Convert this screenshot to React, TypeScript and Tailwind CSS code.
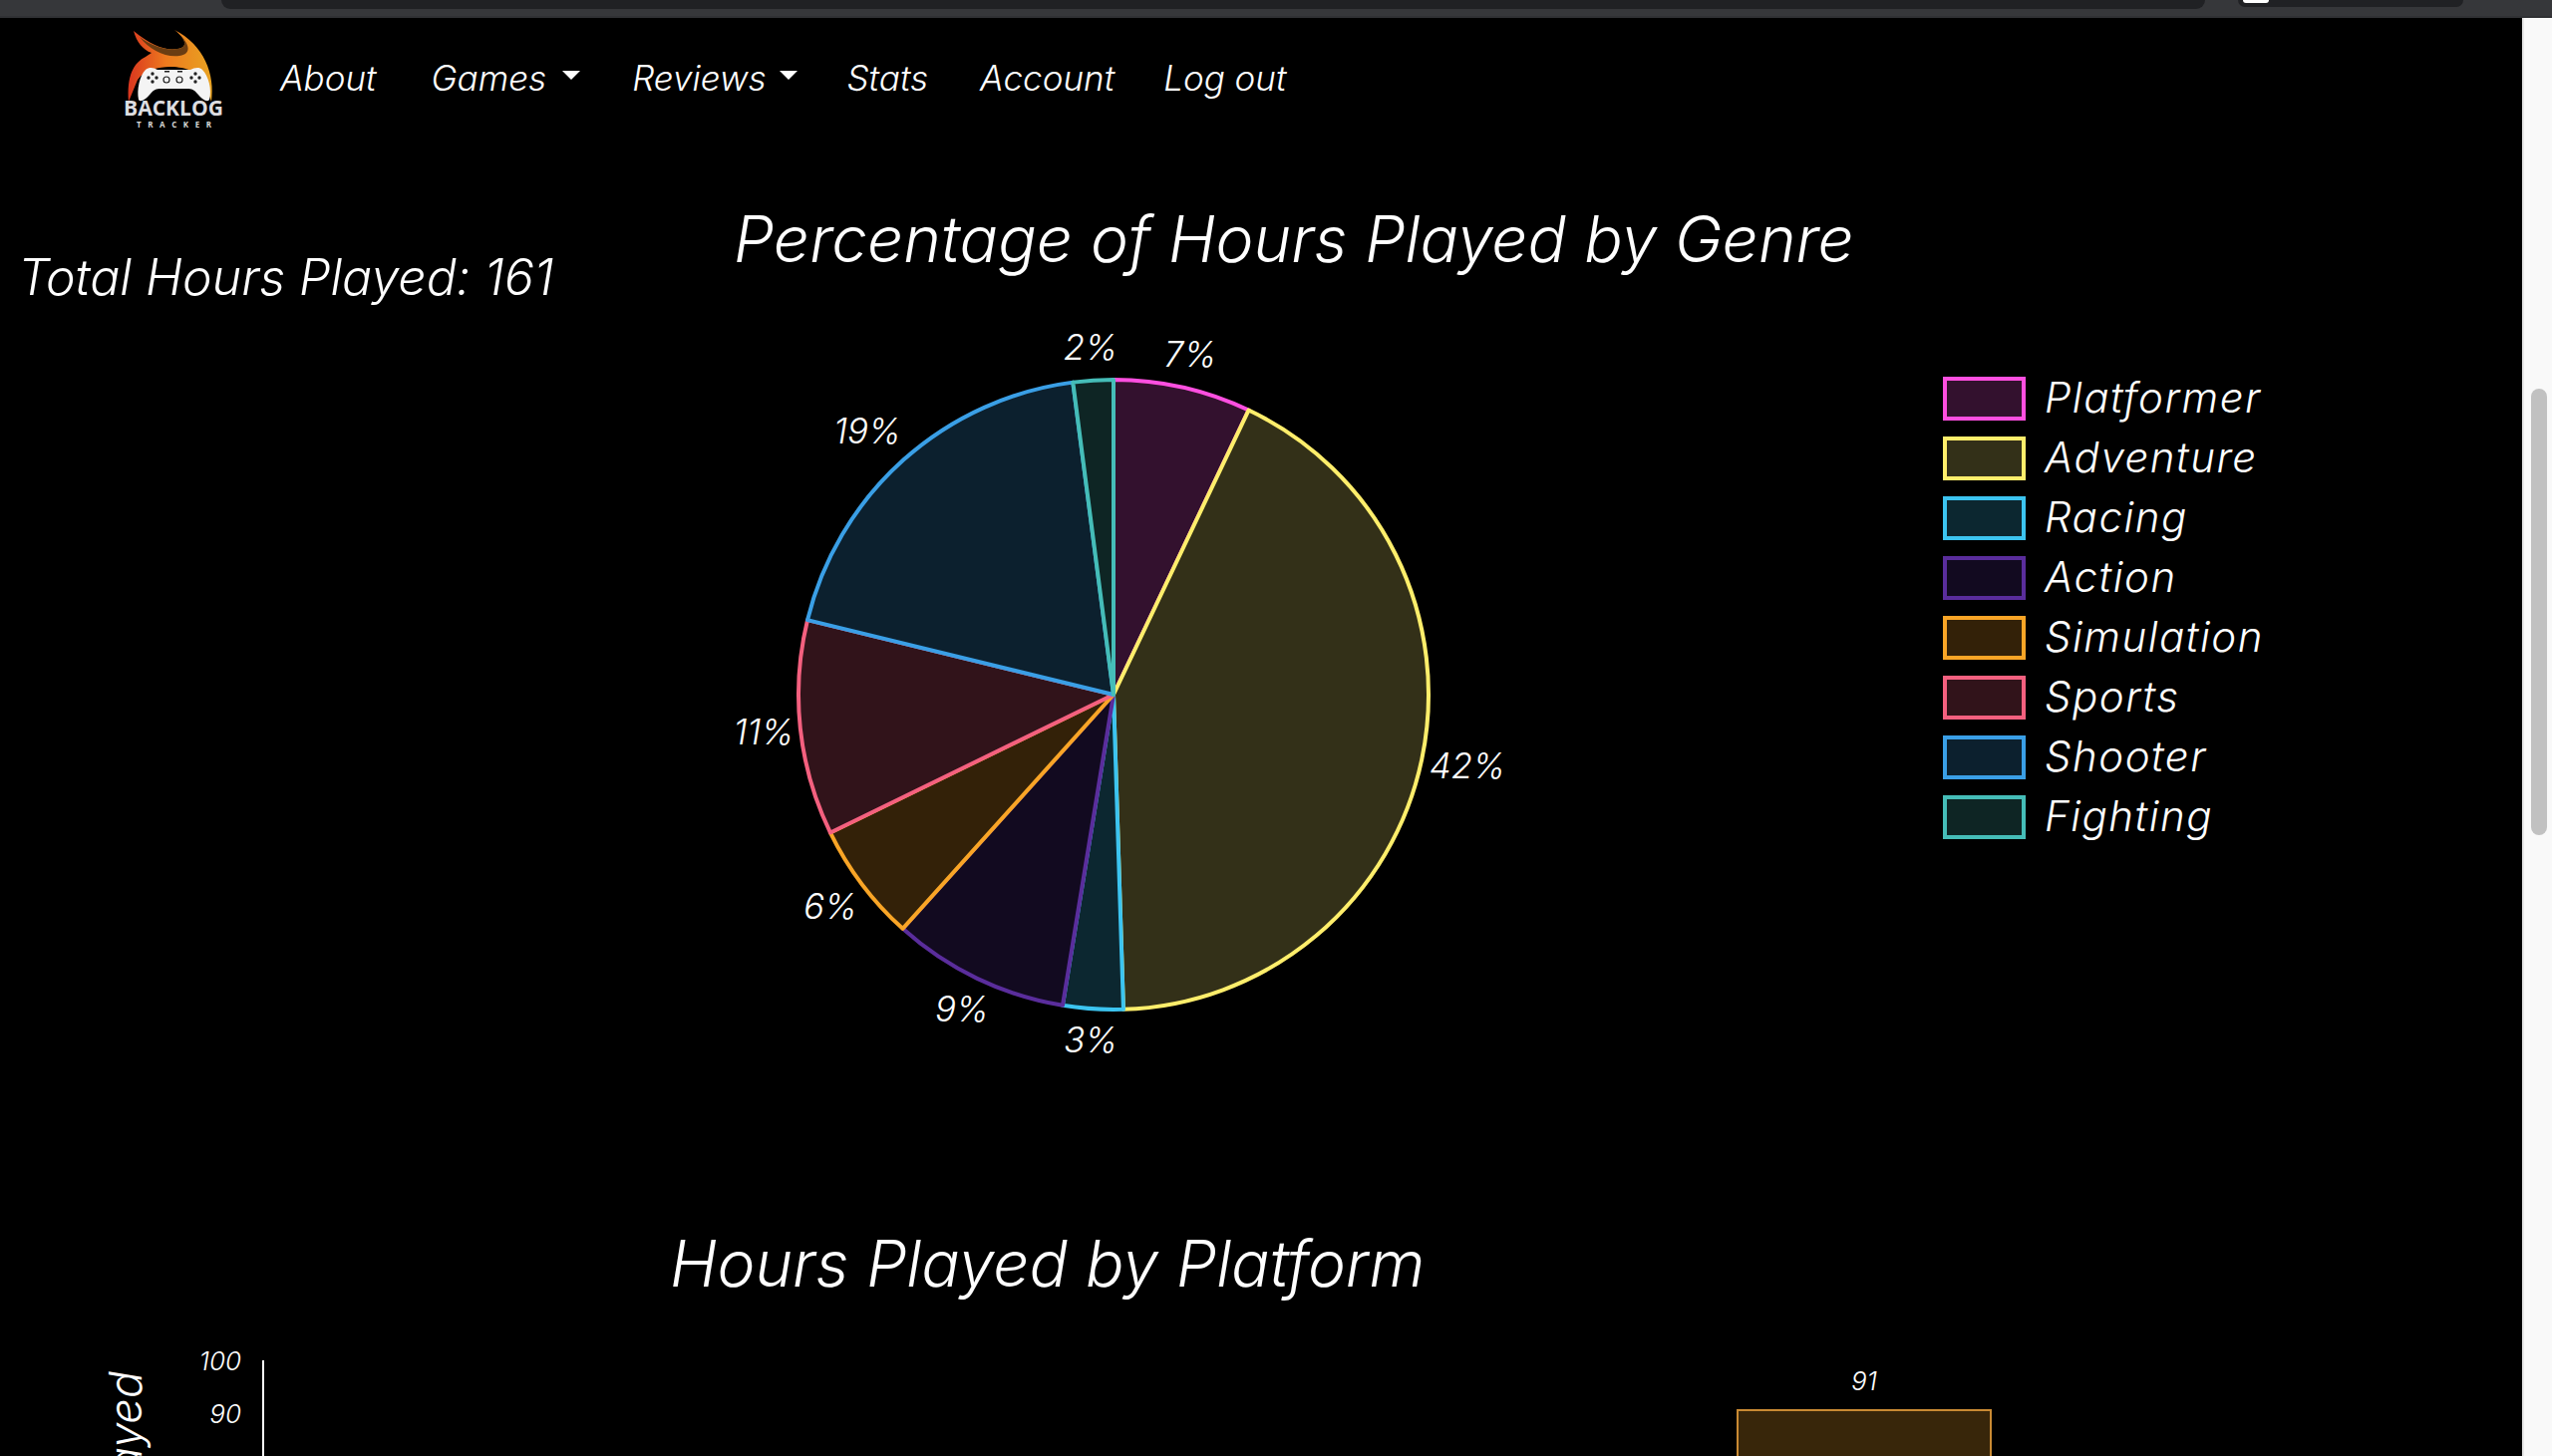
const slices = [
  { label: "Platformer", from: 0, to: 25.4, stroke: "#ff4fe0", fill: "#33112e" },
  { label: "Adventure", from: 25.4, to: 178.2, stroke: "#ffee6b", fill: "#333018" },
  { label: "Racing", from: 178.2, to: 189.3, stroke: "#3cc4f0", fill: "#0c2730" },
  { label: "Action", from: 189.3, to: 222, stroke: "#5a2d9c", fill: "#120a20" },
  { label: "Simulation", from: 222, to: 244, stroke: "#f9a526", fill: "#332108" },
  { label: "Sports", from: 244, to: 283.7, stroke: "#f4607f", fill: "#31131a" },
  { label: "Shooter", from: 283.7, to: 352.6, stroke: "#3a9fe6", fill: "#0c202e" },
  { label: "Fighting", from: 352.6, to: 360, stroke: "#45bdb8", fill: "#0e2524" },
];

const pieLabels = [
  { text: "7%", x: 458, y: 58 },
  { text: "42%", x: 736, y: 471 },
  { text: "3%", x: 358, y: 746 },
  { text: "9%", x: 229, y: 715 },
  { text: "6%", x: 97, y: 612 },
  { text: "11%", x: 30, y: 437 },
  { text: "19%", x: 134, y: 135 },
  { text: "2%", x: 358, y: 51 },
];

function slicePath(from: number, to: number) {
  const cx = 381;
  const cy = 387;
  const r = 316;
  const a = (from * Math.PI) / 180;
  const b = (to * Math.PI) / 180;
  const large = to - from > 180 ? 1 : 0;
  return `M${cx} ${cy} L${cx + r * Math.sin(a)} ${cy - r * Math.cos(a)} A${r} ${r} 0 ${large} 1 ${cx + r * Math.sin(b)} ${cy - r * Math.cos(b)} Z`;
}

function Logo() {
  return (
    <svg width="130" height="115" viewBox="0 0 130 115">
      <defs>
        <linearGradient id="flame" x1="0" y1="0" x2="1" y2="0">
          <stop offset="0" stopColor="#d9361f" />
          <stop offset="0.45" stopColor="#ee7a1e" />
          <stop offset="1" stopColor="#e8a322" />
        </linearGradient>
      </defs>
      <path d="M24 11 C27 22 33 30 42 33 L36 37 C24 43 17 56 19 82 L28 60 C35 50 50 47 60 47 C72 47 88 50 95 62 L102 82 C106 55 95 25 65 10 C78 20 78 28 68 29 C56 31 42 26 24 11 Z" fill="url(#flame)" />
      <path d="M30 17 C40 30 56 38 70 36 C84 34 80 22 65 10 C78 20 78 28 68 29 C56 31 42 26 30 17 Z" fill="#6b3d12" />
      <path d="M29 80 C27 70 30 56 36 50 C40 47 44 48 48 50 L81 50 C85 48 90 47 93 50 C99 56 103 70 100 80 C98 83 93 80 88 74 C85 70 82 69 78 69 L51 69 C47 69 44 70 41 74 C36 80 31 83 29 80 Z" fill="#f4f4f4" />
      <g fill="#222">
        <circle cx="43" cy="54" r="1.7" />
        <circle cx="43" cy="62" r="1.7" />
        <circle cx="39" cy="58" r="1.7" />
        <circle cx="47" cy="58" r="1.7" />
        <circle cx="86" cy="54" r="1.7" />
        <circle cx="86" cy="62" r="1.7" />
        <circle cx="82" cy="58" r="1.7" />
        <circle cx="90" cy="58" r="1.7" />
        <rect x="55" y="51" width="5" height="1.5" />
        <rect x="68" y="51" width="5" height="1.5" />
      </g>
      <circle cx="57" cy="60" r="3" fill="none" stroke="#222" strokeWidth="1.2" />
      <circle cx="70" cy="60" r="3" fill="none" stroke="#222" strokeWidth="1.2" />
      <text x="14" y="96" textLength="100" lengthAdjust="spacingAndGlyphs" fontSize="21" fontStyle="normal" fontWeight="700" fill="#dddde0" fontFamily="'Open Sans', sans-serif">BACKLOG</text>
      <text x="27" y="108" textLength="75" fontSize="8" fontStyle="normal" fontWeight="700" fill="#d8d8d8" fontFamily="'Open Sans', sans-serif">TRACKER</text>
    </svg>
  );
}

function PieChart() {
  return (
    <svg width="820" height="780" viewBox="0 0 820 780" className="block overflow-visible">
      {slices.map((s) => (
        <path key={s.label} d={slicePath(s.from, s.to)} fill={s.fill} stroke={s.stroke} strokeWidth="4" strokeLinejoin="round" />
      ))}
      {pieLabels.map((l) => (
        <text key={l.text} x={l.x} y={l.y} textAnchor="middle" fontSize="35" fontStyle="italic" fontWeight="300" fill="#fff" fontFamily="Inter, sans-serif">{l.text}</text>
      ))}
    </svg>
  );
}

function BarChart() {
  return (
    <svg width="2530" height="140" viewBox="0 0 2530 140" className="block">
      <text transform="translate(142 44) rotate(-90)" fontSize="45" fontStyle="italic" fontWeight="300" fill="#fff" fontFamily="Inter, sans-serif" textAnchor="end">Hours Played</text>
      <line x1="264" y1="33" x2="264" y2="140" stroke="#fff" strokeWidth="2" />
      <text x="242" y="43" textAnchor="end" fontSize="26" fontStyle="italic" fontWeight="300" fill="#fff" fontFamily="Inter, sans-serif">100</text>
      <text x="242" y="96" textAnchor="end" fontSize="26" fontStyle="italic" fontWeight="300" fill="#fff" fontFamily="Inter, sans-serif">90</text>
      <text x="242" y="148" textAnchor="end" fontSize="26" fontStyle="italic" fontWeight="300" fill="#fff" fontFamily="Inter, sans-serif">80</text>
      <text x="1870" y="63" textAnchor="middle" fontSize="26" fontStyle="italic" fontWeight="300" fill="#fff" fontFamily="Inter, sans-serif">91</text>
      <rect x="1743" y="83" width="254" height="80" fill="#38260a" stroke="#c98a33" strokeWidth="2" />
    </svg>
  );
}

function NavLink({ label, caret, className }: { label: string; caret?: boolean; className?: string }) {
  return (
    <a href="#" className={className ?? "flex items-center gap-[16px] text-white"}>
      {label}
      {caret && <span className="w-0 h-0 border-x-[9px] border-x-transparent border-t-[9px] border-t-white mb-[6px]" />}
    </a>
  );
}

export default function App() {
  return (
    <div className="w-[2560px] h-[1461px] overflow-hidden flex flex-col bg-black italic font-light text-white font-['Inter',sans-serif]">
      <div className="h-[18px] shrink-0 bg-[#36373a] flex items-start border-b-2 border-b-[#303134] not-italic">
        <div className="ml-[222px] w-[1990px] h-[9px] bg-[#202124] rounded-b-[14px]" />
        <div className="ml-[33px] w-[226px] h-[7px] bg-[#202124] rounded-b-[14px] pl-[5px]">
          <div className="w-[26px] h-[3px] bg-white rounded-b-full" />
        </div>
      </div>

      <div className="flex flex-1 min-h-0">
        <main className="flex-1 min-w-0 overflow-hidden">
          <nav className="h-[118px] flex items-center pl-[110px] text-[35px]">
            <Logo />
            <div className="flex items-center gap-[52px] ml-[41px] mt-[2px]">
              <NavLink label="About" className="flex items-center text-white mr-[3px]" />
              <NavLink label="Games" caret />
              <NavLink label="Reviews" caret className="flex items-center gap-[13px] text-white mr-[-2px]" />
              <NavLink label="Stats" />
              <NavLink label="Account" className="flex items-center text-white mr-[-3px]" />
              <NavLink label="Log out" />
            </div>
          </nav>

          <section className="flex">
            <div className="w-[736px] shrink-0 pl-[18px] pt-[117px] text-[50px] leading-none">Total Hours Played: 161</div>
            <div className="w-[1120px] shrink-0">
              <h1 className="text-[64px] leading-none pt-[72px] whitespace-nowrap">Percentage of Hours Played by Genre</h1>
              <div className="pt-[38px]">
                <PieChart />
              </div>
            </div>
            <ul className="ml-[93px] pt-[243px] flex flex-col gap-[18px]">
              {slices.map((s) => (
                <li key={s.label} className="flex items-center gap-[19px] h-[42px] text-[42px] tracking-[1.5px] whitespace-nowrap">
                  <span className="w-[83px] h-[44px] shrink-0 border-[4px]" style={{ borderColor: s.stroke, backgroundColor: s.fill }} />
                  <span className="mb-[4px]">{s.label}</span>
                </li>
              ))}
            </ul>
          </section>

          <h2 className="pl-[672px] text-[64px] leading-none pt-[146px] whitespace-nowrap">Hours Played by Platform</h2>
          <div className="mt-[32px]">
            <BarChart />
          </div>
        </main>

        <div className="w-[30px] shrink-0 bg-[#f9f9f9] border-l-2 border-l-[#e8e8e8] pl-[7px] pt-[372px]">
          <div className="w-[16px] h-[448px] bg-[#c1c1c1] rounded-full" />
        </div>
      </div>
    </div>
  );
}
